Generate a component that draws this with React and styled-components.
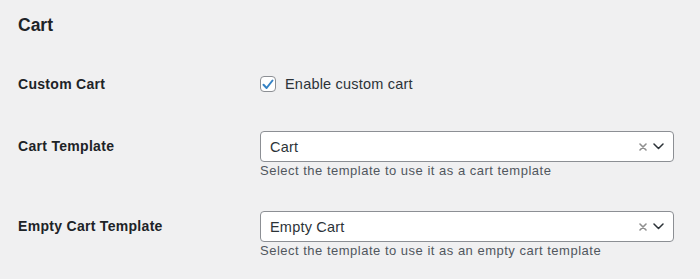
import React from 'react'
import styled, { createGlobalStyle } from 'styled-components'

const GlobalStyle = createGlobalStyle`
	body {
		margin: 0;
		background-color: #f0f0f1;
		font-family: 'Liberation Sans', Arial, sans-serif;
		color: #1d2327;
	}
`

const Page = styled.div`
	padding: 13px 18px 0;
`

const Heading = styled.h2`
	margin: 0;
	font-size: 17.5px;
	line-height: 24px;
	font-weight: 700;
	color: #1d2327;
`

const Row = styled.div`
	display: grid;
	grid-template-columns: 242px 414px;
	align-items: start;
	margin-top: ${p => p.$top}px;
`

const Label = styled.div`
	font-size: 14px;
	font-weight: 700;
	letter-spacing: 0.3px;
	line-height: ${p => p.$lh}px;
	color: #1d2327;
`

const CheckLine = styled.label`
	display: flex;
	align-items: center;
	gap: 9px;
	height: 20px;
	font-size: 14.5px;
	letter-spacing: 0.2px;
	color: #2c3338;
`

const Box = styled.span`
	width: 16px;
	height: 16px;
	box-sizing: border-box;
	border: 1px solid #8c8f94;
	border-radius: 4px;
	background: #fff;
	display: flex;
	align-items: center;
	justify-content: center;
`

const Field = styled.div`
	display: flex;
	flex-direction: column;
`

const Select = styled.div`
	height: 31px;
	box-sizing: border-box;
	border: 1px solid #8c8f94;
	border-radius: 4px;
	background: #fff;
	display: flex;
	align-items: center;
	padding: 0 9px;
	font-size: 14.5px;
	letter-spacing: 0.2px;
	color: #2c3338;
`

const Value = styled.span`
	flex: 1;
`

const Indicators = styled.span`
	display: flex;
	align-items: center;
	gap: 6px;
`

const Help = styled.p`
	margin: 0;
	font-size: 13px;
	letter-spacing: 0.5px;
	line-height: 18px;
	color: #50575e;
`

const Clear = () => (
	<svg width="8" height="8" viewBox="0 0 8 8">
		<path d="M1 1L7 7M7 1L1 7" stroke="#8f8f8f" strokeWidth="1.6" strokeLinecap="round" />
	</svg>
)

const Chevron = () => (
	<svg width="11" height="7" viewBox="0 0 11 7">
		<path d="M1 1L5.5 5.5L10 1" stroke="#2c3338" strokeWidth="1.5" fill="none" strokeLinecap="round" strokeLinejoin="round" />
	</svg>
)

const TemplateSelect = ({ value, help }) => (
	<Field>
		<Select>
			<Value>{value}</Value>
			<Indicators>
				<Clear />
				<Chevron />
			</Indicators>
		</Select>
		<Help>{help}</Help>
	</Field>
)

const App = () => (
	<>
		<GlobalStyle />
		<Page>
			<Heading>Cart</Heading>
			<Row $top={37}>
				<Label $lh={20}>Custom Cart</Label>
				<CheckLine>
					<Box>
						<svg width="12" height="11" viewBox="0 0 12 11">
							<path d="M1.5 5.8L4.6 9L10.5 1.5" stroke="#3582c4" strokeWidth="2" fill="none" strokeLinecap="round" strokeLinejoin="round" />
						</svg>
					</Box>
					Enable custom cart
				</CheckLine>
			</Row>
			<Row $top={37}>
				<Label $lh={31}>Cart Template</Label>
				<TemplateSelect value="Cart" help="Select the template to use it as a cart template" />
			</Row>
			<Row $top={31}>
				<Label $lh={31}>Empty Cart Template</Label>
				<TemplateSelect value="Empty Cart" help="Select the template to use it as an empty cart template" />
			</Row>
		</Page>
	</>
)

export default App
